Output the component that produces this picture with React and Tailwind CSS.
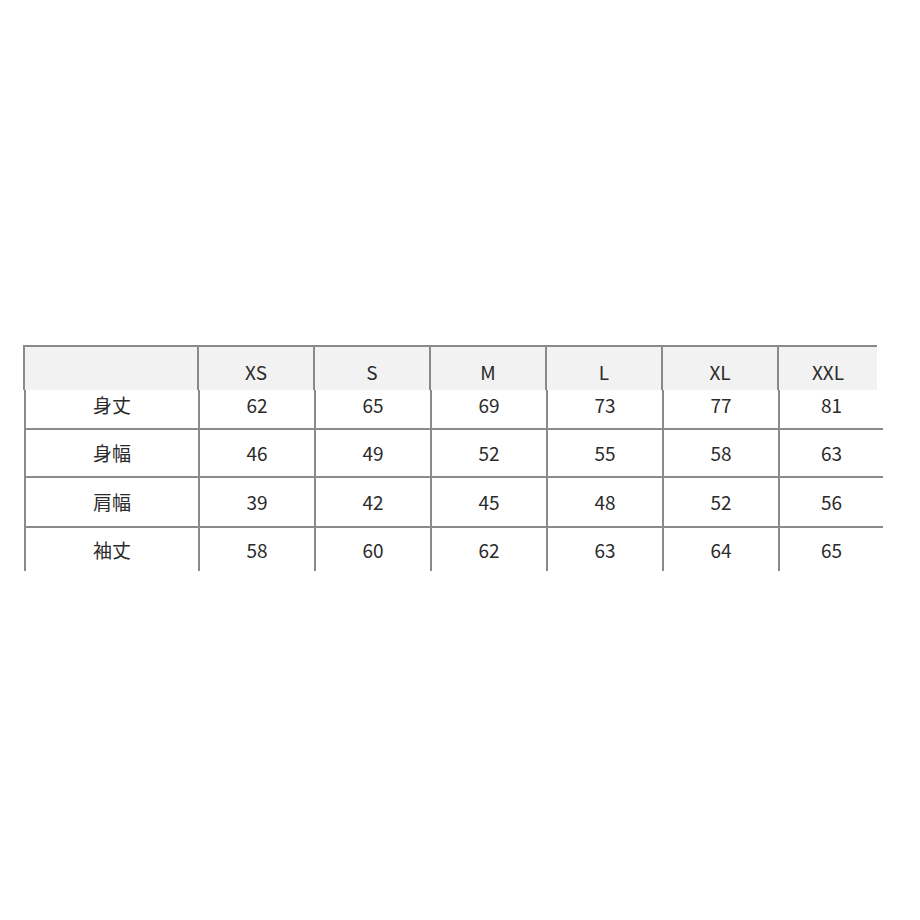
const sizes = ['XS', 'S', 'M', 'L', 'XL', 'XXL'];

const rows = [
  { label: '身丈', values: [62, 65, 69, 73, 77, 81], h: 'h-[40px]', pad: 'pb-[7px]', line: true },
  { label: '身幅', values: [46, 49, 52, 55, 58, 63], h: 'h-[48px]', pad: '', line: true },
  { label: '肩幅', values: [39, 42, 45, 48, 52, 56], h: 'h-[50px]', pad: '', line: true },
  { label: '袖丈', values: [58, 60, 62, 63, 64, 65], h: 'h-[43px]', pad: 'pt-[1px]', line: false },
];

const Cell = ({ w, pad = '', children }) => (
  <div className={`${w} ${pad} flex items-center justify-center border-l-2 border-[#8a8a8a]`}>{children}</div>
);

const App = () => {
  return (
    <div
      className="w-[920px] h-[920px] bg-white pt-[345px] text-[19px] text-[#2b2b2b]"
      style={{ fontFamily: '"Noto Sans CJK JP", "Noto Sans", sans-serif' }}
    >
      <div className="ml-[23px] w-[854px] h-[45px] flex border-t-2 border-[#8a8a8a] bg-[#f2f2f2]">
        <Cell w="w-[174px]" />
        {sizes.map((s) => (
          <Cell key={s} pad="pt-[8px]" w={s === 'XXL' ? 'w-[100px]' : 'w-[116px]'}>{s}</Cell>
        ))}
      </div>
      {rows.map((r) => (
        <div
          key={r.label}
          className={`ml-[24px] w-[859px] flex ${r.h} ${r.line ? 'border-b-2 border-[#8a8a8a]' : ''}`}
        >
          <Cell w="w-[174px]" pad={r.pad}>{r.label}</Cell>
          {r.values.map((v, i) => (
            <Cell key={i} pad={r.pad} w={i === 5 ? 'w-[105px]' : 'w-[116px]'}>{v}</Cell>
          ))}
        </div>
      ))}
    </div>
  );
};

export default App;
